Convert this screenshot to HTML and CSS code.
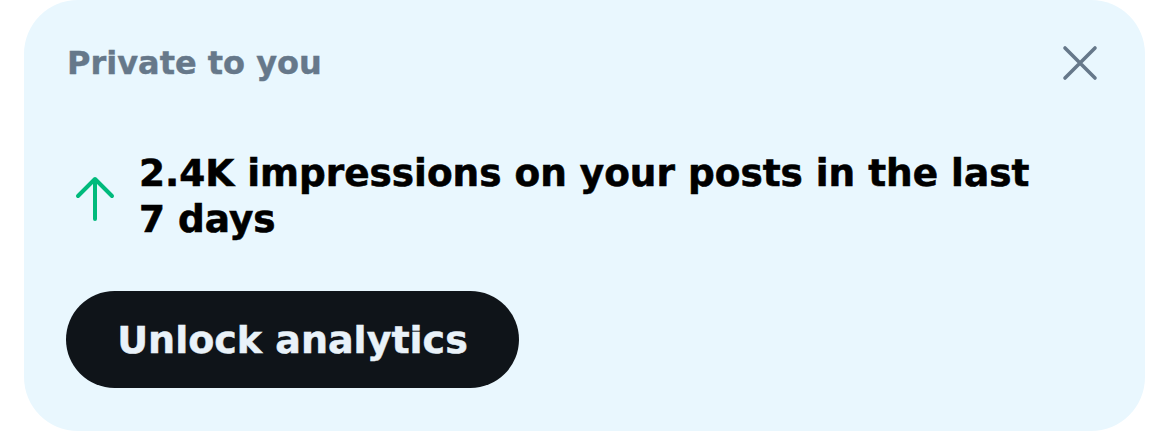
FILE: index.html
```html
<!DOCTYPE html>
<html lang="en">
<head>
    <meta charset="UTF-8">
    <meta name="viewport" content="width=device-width, initial-scale=1.0">
    <title>Private to you</title>
    <link rel="stylesheet" href="styles.css">
</head>
<body>
    <div class="card">
        <div class="card-head">
            <span class="card-title">Private to you</span>
            <button class="close-btn" aria-label="Close">
                <svg width="36" height="36" viewBox="0 0 36 36">
                    <path d="M3 3 L33 33 M33 3 L3 33" stroke="#66788a" stroke-width="3.6" stroke-linecap="round" fill="none"/>
                </svg>
            </button>
        </div>
        <div class="stat">
            <svg class="stat-arrow" width="40" height="48" viewBox="0 0 40 48">
                <path d="M20 44 L20 4 M3 21 L20 4 L37 21" stroke="#00ba7c" stroke-width="4" stroke-linecap="round" stroke-linejoin="round" fill="none"/>
            </svg>
            <p class="stat-text">2.4K impressions on your posts in the last 7 days</p>
        </div>
        <button class="unlock-btn">Unlock analytics</button>
    </div>
</body>
</html>
```

FILE: styles.css
```css
body {
    margin: 0;
    background: #fff;
    font-family: "DejaVu Sans", sans-serif;
}
.card {
    margin: 0 25px 0 24px;
    height: 431px;
    box-sizing: border-box;
    background: #e9f7fe;
    border-radius: 54px;
    padding: 43px 44px 0 41px;
}
.card-head {
    display: flex;
    align-items: center;
    justify-content: space-between;
    height: 40px;
}
.card-title {
    margin-left: 2px;
    font-size: 32px;
    font-weight: 700;
    line-height: 40px;
    color: #66788a;
    -webkit-text-stroke: 0.4px #66788a;
}
.close-btn {
    border: none;
    background: transparent;
    padding: 0;
    margin-right: 3px;
    display: flex;
}
.stat {
    display: flex;
    align-items: flex-start;
    margin-top: 67px;
}
.stat-arrow {
    margin: 25px 0 0 10px;
    flex: none;
}
.stat-text {
    margin: 0 0 0 24px;
    width: 900px;
    font-size: 37.4px;
    font-weight: 700;
    line-height: 46px;
    color: #000;
    -webkit-text-stroke: 0.6px #000;
}
.unlock-btn {
    display: block;
    margin: 49px 0 0 1px;
    width: 453px;
    height: 97px;
    padding: 0;
    border: none;
    border-radius: 49px;
    background: #0f1419;
    color: #e9f2f9;
    font-family: "DejaVu Sans", sans-serif;
    font-size: 38px;
    font-weight: 700;
    -webkit-text-stroke: 0.5px #e9f2f9;
}
```
